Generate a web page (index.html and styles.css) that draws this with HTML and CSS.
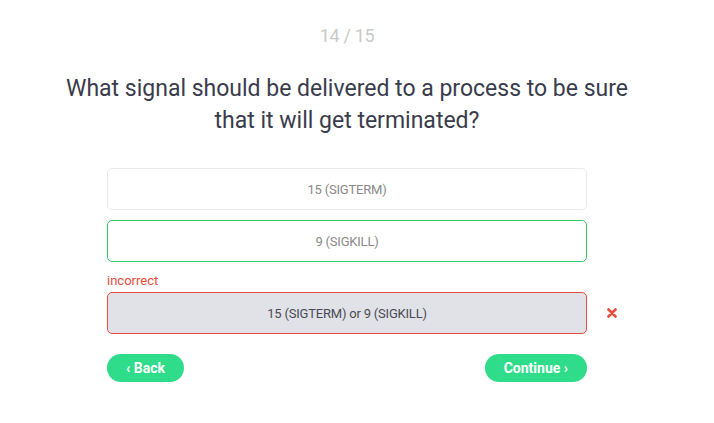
FILE: index.html
```html
<!DOCTYPE html>
<html>
<head>
<meta charset="utf-8">
<link rel="stylesheet" href="styles.css">
</head>
<body>
<main class="quiz">
  <div class="counter">14 / 15</div>
  <h1 class="question">What signal should be delivered to a process to be sure that it will get terminated?</h1>
  <div class="options">
    <div class="option">15 (SIGTERM)</div>
    <div class="option option-correct">9 (SIGKILL)</div>
    <div class="option-group">
      <div class="label-incorrect">incorrect</div>
      <div class="option-row">
        <div class="option option-wrong">15 (SIGTERM) or 9 (SIGKILL)</div>
        <svg class="x-icon" width="10" height="10" viewBox="0 0 10 10"><path d="M1.5 1.5 L8.5 8.5 M8.5 1.5 L1.5 8.5" stroke="#e74c3c" stroke-width="2.6" stroke-linecap="round"/></svg>
      </div>
    </div>
    <div class="nav">
      <button class="btn">‹ Back</button>
      <button class="btn">Continue ›</button>
    </div>
  </div>
</main>
</body>
</html>
```
FILE: styles.css
```css
html, body {
  margin: 0;
  padding: 0;
  background: #fff;
}
body {
  font-family: Roboto, "Liberation Sans", sans-serif;
}
.quiz {
  width: 694px;
  display: flex;
  flex-direction: column;
  align-items: center;
  padding-top: 26px;
}
.counter {
  font-size: 18px;
  line-height: 20px;
  color: #cacaca;
  letter-spacing: -0.3px;
}
.question {
  margin: 27px 0 0;
  width: 590px;
  text-align: center;
  font-weight: 400;
  font-size: 23px;
  line-height: 32px;
  color: #3a3c4c;
}
.options {
  width: 480px;
  margin-top: 31px;
  display: flex;
  flex-direction: column;
  gap: 10px;
}
.option {
  box-sizing: border-box;
  height: 42px;
  border: 1px solid #ebebeb;
  border-radius: 5px;
  display: flex;
  align-items: center;
  justify-content: center;
  font-size: 13px;
  color: #8a8a8a;
  letter-spacing: -0.2px;
}
.option-correct {
  border-color: #33c96f;
}
.option-group {
  display: flex;
  flex-direction: column;
}
.label-incorrect {
  font-size: 13px;
  line-height: 18px;
  color: #e74c3c;
  margin-bottom: 2px;
}
.option-row {
  position: relative;
}
.option-wrong {
  background: #e1e2e7;
  border-color: #e74c3c;
  color: #4a4a55;
}
.x-icon {
  position: absolute;
  left: 500px;
  top: 16px;
}
.nav {
  display: flex;
  justify-content: space-between;
  margin-top: 10px;
}
.btn {
  height: 28px;
  border: none;
  border-radius: 14px;
  background: #2fdc8a;
  color: #fff;
  font-family: Roboto, "Liberation Sans", sans-serif;
  font-weight: 700;
  font-size: 14px;
  padding: 0 19px;
  cursor: pointer;
}
```
